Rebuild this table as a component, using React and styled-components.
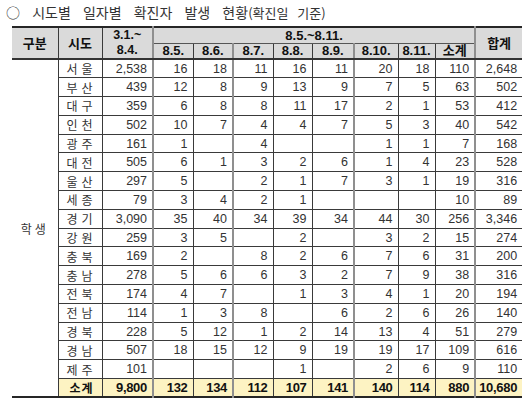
import React from "react";
import styled, { createGlobalStyle } from "styled-components";

const GlobalStyle = createGlobalStyle`
  html, body {
    margin: 0;
    padding: 0;
    background: #fff;
  }
  body {
    font-family: "Liberation Sans", "Noto Sans CJK KR", sans-serif;
    color: #222;
  }
`;

const Page = styled.div`
  width: 530px;
  height: 403px;
  overflow: hidden;
  box-sizing: border-box;
`;

const Title = styled.div`
  height: 26px;
  line-height: 24px;
  padding-left: 6px;
  font-family: "Noto Sans CJK KR", sans-serif;
  font-size: 14px;
  color: #333;
  word-spacing: 9px;
  white-space: nowrap;
`;

const Note = styled.span`
  font-size: 13px;
  word-spacing: 6px;
`;

const Table = styled.table`
  border-collapse: collapse;
  table-layout: fixed;
  width: 510px;
  margin-left: 12px;
  border-top: 2px solid #262626;
  border-bottom: 2px solid #262626;
`;

const lineFor = (kind) =>
  kind === "thick"
    ? "2px solid #8f8f8f"
    : kind === "thin"
    ? "1px solid #3a3a3a"
    : "none";

const HeadRow = styled.tr`
  height: ${(p) => p.$h}px;
`;

const Row = styled.tr`
  height: 18.8px;
`;

const HeadCell = styled.th`
  padding: 0;
  background: #dadada;
  color: #111;
  font-family: "Liberation Sans", "Noto Sans CJK KR", sans-serif;
  font-size: ${(p) => (p.$stack ? "12.5px" : "13px")};
  font-weight: 700;
  line-height: ${(p) => (p.$stack ? "15px" : "13px")};
  text-align: center;
  vertical-align: middle;
  border-left: ${(p) => lineFor(p.$left)};
  border-bottom: ${(p) => (p.$thin ? "1px solid #555" : "2px solid #333")};
  white-space: nowrap;
`;

const GroupCell = styled.td`
  padding: 0;
  text-align: center;
  vertical-align: middle;
  font-family: "Noto Sans CJK KR", sans-serif;
  font-size: 12px;
  letter-spacing: 3px;
  color: #333;
  border-right: 1px solid #3a3a3a;
`;

const NameCell = styled.td`
  padding: 0 0 0 3px;
  text-align: center;
  vertical-align: middle;
  font-family: "Noto Sans CJK KR", sans-serif;
  font-size: 12px;
  font-weight: ${(p) => (p.$total ? 700 : 400)};
  letter-spacing: ${(p) => (p.$total ? "1px" : "4px")};
  color: ${(p) => (p.$total ? "#111" : "#333")};
  background: ${(p) => (p.$total ? "#fdf3c3" : "transparent")};
  border-left: 1px solid #3a3a3a;
  border-bottom: 1px solid #3a3a3a;
`;

const NumCell = styled.td`
  padding: 0 5px 0 0;
  text-align: right;
  vertical-align: middle;
  font-family: "Liberation Sans", sans-serif;
  font-size: ${(p) => (p.$total ? "13px" : "12.5px")};
  font-weight: ${(p) => (p.$total ? 700 : 400)};
  letter-spacing: ${(p) => (p.$total ? "-0.3px" : "0")};
  color: ${(p) => (p.$total ? "#111" : "#333")};
  background: ${(p) => (p.$total ? "#fdf3c3" : "transparent")};
  border-left: ${(p) => lineFor(p.$left)};
  border-bottom: 1px solid #3a3a3a;
  white-space: nowrap;
`;

const Col = styled.col`
  width: ${(p) => p.$w}px;
`;

const widths = [46, 44, 51, 40, 40, 40, 39, 42, 44, 37, 40, 47];
const edges = [
  "none",
  "thin",
  "thin",
  "thick",
  "thin",
  "thick",
  "thin",
  "thin",
  "thick",
  "thin",
  "thin",
  "thick",
];

const days = ["8.5.", "8.6.", "8.7.", "8.8.", "8.9.", "8.10.", "8.11.", "소계"];

const rows = [
  ["서울", "2,538", 16, 18, 11, 16, 11, 20, 18, 110, "2,648"],
  ["부산", 439, 12, 8, 9, 13, 9, 7, 5, 63, 502],
  ["대구", 359, 6, 8, 8, 11, 17, 2, 1, 53, 412],
  ["인천", 502, 10, 7, 4, 4, 7, 5, 3, 40, 542],
  ["광주", 161, 1, "", 4, "", "", 1, 1, 7, 168],
  ["대전", 505, 6, 1, 3, 2, 6, 1, 4, 23, 528],
  ["울산", 297, 5, "", 2, 1, 7, 3, 1, 19, 316],
  ["세종", 79, 3, 4, 2, 1, "", "", "", 10, 89],
  ["경기", "3,090", 35, 40, 34, 39, 34, 44, 30, 256, "3,346"],
  ["강원", 259, 3, 5, "", 2, "", 3, 2, 15, 274],
  ["충북", 169, 2, "", 8, 2, 6, 7, 6, 31, 200],
  ["충남", 278, 5, 6, 6, 3, 2, 7, 9, 38, 316],
  ["전북", 174, 4, 7, "", 1, 3, 4, 1, 20, 194],
  ["전남", 114, 1, 3, 8, "", 6, 2, 6, 26, 140],
  ["경북", 228, 5, 12, 1, 2, 14, 13, 4, 51, 279],
  ["경남", 507, 18, 15, 12, 9, 19, 19, 17, 109, 616],
  ["제주", 101, "", "", "", 1, "", 2, 6, 9, 110],
];

const total = ["소계", "9,800", 132, 134, 112, 107, 141, 140, 114, 880, "10,680"];

function DataRow({ data, first, isTotal }) {
  const [name, ...values] = data;
  return (
    <Row>
      {first && <GroupCell rowSpan={rows.length + 1}>학생</GroupCell>}
      <NameCell $total={isTotal}>{name}</NameCell>
      {values.map((v, i) => (
        <NumCell key={i} $left={edges[i + 2]} $total={isTotal}>
          {v}
        </NumCell>
      ))}
    </Row>
  );
}

export default function App() {
  return (
    <>
      <GlobalStyle />
      <Page>
        <Title>
          ○ 시도별 일자별 확진자 발생 현황<Note>(확진일 기준)</Note>
        </Title>
        <Table>
          <colgroup>
            {widths.map((w, i) => (
              <Col key={i} $w={w} />
            ))}
          </colgroup>
          <thead>
            <HeadRow $h={16}>
              <HeadCell rowSpan={2} $left="none">
                구분
              </HeadCell>
              <HeadCell rowSpan={2} $left="thin">
                시도
              </HeadCell>
              <HeadCell rowSpan={2} $left="thin" $stack>
                3.1.~
                <br />
                8.4.
              </HeadCell>
              <HeadCell colSpan={8} $left="thick" $thin>
                8.5.~8.11.
              </HeadCell>
              <HeadCell rowSpan={2} $left="thick">
                합계
              </HeadCell>
            </HeadRow>
            <HeadRow $h={16}>
              {days.map((d, i) => (
                <HeadCell key={d} $left={edges[i + 3]}>
                  {d}
                </HeadCell>
              ))}
            </HeadRow>
          </thead>
          <tbody>
            {rows.map((r, i) => (
              <DataRow key={r[0]} data={r} first={i === 0} />
            ))}
            <DataRow data={total} isTotal />
          </tbody>
        </Table>
      </Page>
    </>
  );
}
